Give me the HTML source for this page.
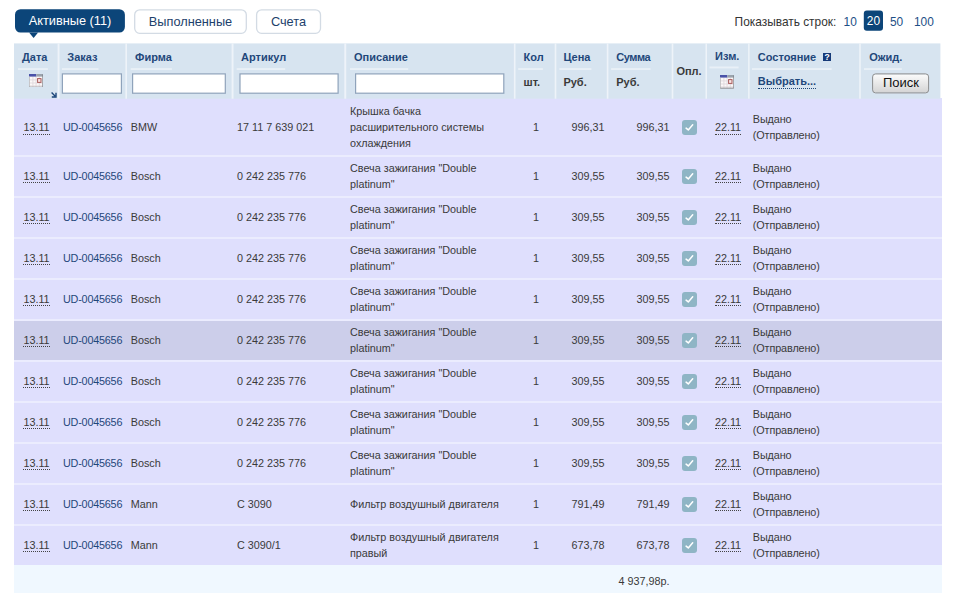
<!DOCTYPE html>
<html><head><meta charset="utf-8">
<style>
*{box-sizing:border-box}
html,body{margin:0;padding:0;background:#fff}
body{width:960px;height:598px;overflow:hidden;position:relative;font-family:"Liberation Sans",Arial,sans-serif;font-size:12px;color:#333}
.tab{z-index:2;position:absolute;top:9.2px;height:24.7px;line-height:25.6px;font-size:12.75px;color:#1d3f6b;text-align:center}
.tab.act{color:#fff;height:23.5px;line-height:24.6px}
.pg{z-index:2;position:absolute;top:12.5px;font-size:11.9px;color:#333;height:18px;line-height:18px}
.pg a{color:#1d4f86;text-decoration:none}
.hd{position:absolute;left:14px;top:43.4px;width:926.5px;height:55px;z-index:2}
.hdi{position:absolute;left:-14px;top:-43.4px;width:960px;height:120px;color:#1f477a;font-size:11px;font-weight:bold}
.l{position:absolute;top:49.8px;white-space:nowrap;line-height:14px}
.hdi input{position:absolute;top:73.4px;height:20.1px;border:1px solid transparent;background:transparent;padding:0;margin:0;outline:none}
.s{position:absolute;top:74.5px;color:#3a3a3a;white-space:nowrap;line-height:14px}
table{position:absolute;left:14px;top:98px;width:927.6px;border-collapse:separate;border-spacing:0;table-layout:fixed}
td{height:41px;font-size:10.8px;padding:0 0 2px 0;vertical-align:middle;border-top:2px solid #ebecfe;background:#dfdffd;color:#3a3a3a;line-height:16px;overflow:hidden;white-space:nowrap}
tr.h td{background:#ccceea}
tr.f td{height:57px;border-top:none;padding-top:1.2px;padding-bottom:0}
td.o{padding-left:4px;color:#1f477a;letter-spacing:-0.2px}
td.fm{padding-left:3.7px}
td.d{padding-left:4px}
td.a{padding-left:4px}
td.st{padding-left:3.8px;letter-spacing:-0.1px}
td.r{text-align:right;padding-right:3.6px}
td.q{text-align:center;padding-right:0px}
td.c{text-align:center}
td.c2{text-align:center;padding-right:0px}
td.k{padding-left:9.2px}
a.dt{color:#3a3a3a;text-decoration:none;border-bottom:1px dotted #444;display:inline-block;line-height:12.6px}
.cb{display:inline-block;width:15px;height:15px;border-radius:3px;background:#8fb5c5;vertical-align:middle;position:relative;top:0.2px}
.cb svg{display:block}
tr.f .cb{top:-0.6px}
tfoot td{background:#f0f8ff;height:28px;border-top:none;padding:3px 0 0 0}
.btn{position:absolute;left:872px;top:73px;width:57px;height:20px;border:1px solid #8e8e8e;border-radius:3.5px;background:linear-gradient(#fbfbfb,#d5d5d5);transform:translate(0.1px,0.4px);color:#111;font-weight:normal;font-size:13px;text-align:center;line-height:18.8px;padding-left:0.6px}
</style></head><body>
<svg style="position:absolute;left:0;top:0;z-index:1" width="960" height="110" viewBox="0 0 960 110"><rect x="15" y="9.2" width="109.9" height="23.4" rx="5.5" fill="#0c4579"/><path d="M29.1 32.4 H38.1 L33.6 38.1 Z" fill="#0c4579"/><rect x="134.7" y="9.8" width="111.6" height="23.5" rx="5" fill="#fff" stroke="#d3dbe4" stroke-width="1.3"/><rect x="256.6" y="9.8" width="63.9" height="23.5" rx="5" fill="#fff" stroke="#d3dbe4" stroke-width="1.3"/><rect x="863.8" y="10.5" width="19.2" height="20.3" rx="3" fill="#0c4579"/><rect x="14" y="43.4" width="926.4" height="55.3" fill="#d7e4f0"/><rect x="18" y="68.1" width="29.9" height="1.9" fill="#e9f0f7"/><rect x="62" y="68.1" width="36.5" height="1.9" fill="#e9f0f7"/><rect x="130.7" y="68.1" width="41.2" height="1.9" fill="#e9f0f7"/><rect x="236.7" y="68.1" width="48.5" height="1.9" fill="#e9f0f7"/><rect x="350" y="68.1" width="58.2" height="1.9" fill="#e9f0f7"/><rect x="518.2" y="68.1" width="24.7" height="1.9" fill="#e9f0f7"/><rect x="559.4" y="68.1" width="32.0" height="1.9" fill="#e9f0f7"/><rect x="611.1" y="68.1" width="39.4" height="1.9" fill="#e9f0f7"/><rect x="752" y="68.1" width="79.6" height="1.9" fill="#e9f0f7"/><rect x="864" y="68.1" width="37.8" height="1.9" fill="#e9f0f7"/><rect x="709.5" y="66.5" width="29.1" height="1.9" fill="#e9f0f7"/><rect x="57.6" y="43.4" width="1.9" height="55.3" fill="#eef3f9"/><rect x="125.4" y="43.4" width="1.6" height="55.3" fill="#eef3f9"/><rect x="231.6" y="43.4" width="1.9" height="55.3" fill="#eef3f9"/><rect x="344.3" y="43.4" width="1.9" height="55.3" fill="#eef3f9"/><rect x="513.9" y="43.4" width="1.6" height="55.3" fill="#eef3f9"/><rect x="554.7" y="43.4" width="1.6" height="55.3" fill="#eef3f9"/><rect x="606.8" y="43.4" width="1.6" height="55.3" fill="#eef3f9"/><rect x="671.7" y="43.4" width="1.6" height="55.3" fill="#eef3f9"/><rect x="705.5" y="43.4" width="1.5" height="55.3" fill="#eef3f9"/><rect x="748.1" y="43.4" width="1.5" height="55.3" fill="#eef3f9"/><rect x="859.2" y="43.4" width="1.6" height="55.3" fill="#eef3f9"/><rect x="62.4" y="73.9" width="59.0" height="19.3" fill="#fff" stroke="#8fa3bb" stroke-width="1.2"/><rect x="132.6" y="73.9" width="92.7" height="19.3" fill="#fff" stroke="#8fa3bb" stroke-width="1.2"/><rect x="240.0" y="73.9" width="98.1" height="19.3" fill="#fff" stroke="#8fa3bb" stroke-width="1.2"/><rect x="355.6" y="73.9" width="148.2" height="19.3" fill="#fff" stroke="#8fa3bb" stroke-width="1.2"/></svg>
<div class="tab act" style="left:15px;width:110px;font-weight:normal">Активные (11)</div>
<div class="tab" style="left:134px;width:113px">Выполненные</div>
<div class="tab" style="left:256px;width:65px">Счета</div>
<div class="pg" style="left:734.6px">Показывать строк:</div>
<div class="pg" style="left:843.6px"><a>10</a></div>
<div class="pg" style="left:863.8px;width:19.2px;top:10.6px;height:20.2px;line-height:21.5px;color:#fff;text-align:center">20</div>
<div class="pg" style="left:890px"><a>50</a></div>
<div class="pg" style="left:914px"><a>100</a></div>
<div class="hd"><div class="hdi">
<span class="l" style="left:22px">Дата</span><span class="l" style="left:67.3px">Заказ</span><span class="l" style="left:135.1px">Фирма</span><span class="l" style="left:241px">Артикул</span><span class="l" style="left:354px">Описание</span><span class="l" style="left:523.5px">Кол</span><span class="l" style="left:563.4px">Цена</span><span class="l" style="left:616.2px;letter-spacing:-0.45px">Сумма</span><span class="l" style="left:757.8px">Состояние</span><span class="l" style="left:869.2px">Ожид.</span><input type="text" style="left:61.8px;width:60.2px"><input type="text" style="left:132px;width:93.9px"><input type="text" style="left:239.4px;width:99.3px"><input type="text" style="left:355px;width:149.4px">
<svg style="position:absolute;left:28.5px;top:73.8px" width="14.2" height="13.6" viewBox="0 0 14.2 13.6"><rect x="0" y="0" width="14.2" height="13.6" fill="#fbf8f8"/><path d="M3.9 2.6v10.6M7.1 2.6v10.6M10.3 2.6v10.6M0.6 5.9h13M0.6 9h13M0.6 11.9h13" stroke="#e0d8dc" stroke-width="0.9" fill="none"/><rect x="0" y="0" width="7.4" height="2.6" fill="#4a52a8"/><rect x="7.4" y="0" width="6.8" height="2.6" fill="#9aa3ad"/><path d="M0.4 2.6V13.2" stroke="#b4b4b8" stroke-width="0.8" fill="none"/><path d="M13.8 0.5V13.2H0.2" stroke="#7c8086" stroke-width="0.9" fill="none"/><rect x="8.6" y="4.6" width="3.4" height="3.8" fill="#f8e4e4" stroke="#a85a5a" stroke-width="1"/></svg><svg style="position:absolute;left:50.8px;top:92px" width="6" height="6" viewBox="0 0 6 6"><path d="M0.6 0.6 L4 4 M5 0.8 V5 H0.8" stroke="#1a4478" stroke-width="1.4" fill="none"/></svg>
<span class="s" style="left:523.5px">шт.</span><span class="s" style="left:563.4px">Руб.</span><span class="s" style="left:616.2px">Руб.</span>
<span class="l" style="left:676.4px;top:64.1px;color:#3a3a3a">Опл.</span>
<span class="l" style="left:715.1px;top:48.7px">Изм.</span><span class="u" style="left:709.5px;width:29.1px;top:66.8px"></span><svg style="position:absolute;left:720px;top:75.3px" width="14.2" height="13.6" viewBox="0 0 14.2 13.6"><rect x="0" y="0" width="14.2" height="13.6" fill="#fbf8f8"/><path d="M3.9 2.6v10.6M7.1 2.6v10.6M10.3 2.6v10.6M0.6 5.9h13M0.6 9h13M0.6 11.9h13" stroke="#e0d8dc" stroke-width="0.9" fill="none"/><rect x="0" y="0" width="7.4" height="2.6" fill="#4a52a8"/><rect x="7.4" y="0" width="6.8" height="2.6" fill="#9aa3ad"/><path d="M0.4 2.6V13.2" stroke="#b4b4b8" stroke-width="0.8" fill="none"/><path d="M13.8 0.5V13.2H0.2" stroke="#7c8086" stroke-width="0.9" fill="none"/><rect x="8.6" y="4.6" width="3.4" height="3.8" fill="#f8e4e4" stroke="#a85a5a" stroke-width="1"/></svg>
<svg style="position:absolute;left:823.2px;top:52.7px" width="8.2" height="8.4" viewBox="0 0 8.2 8.4"><rect width="8.2" height="8.4" fill="#163a78"/><text x="4.1" y="7.3" font-size="8.6" font-weight="bold" fill="#fff" text-anchor="middle" font-family="Liberation Sans, sans-serif">?</text></svg>
<span class="s" style="left:757.8px;color:#1f477a;border-bottom:1px dotted #1f477a;line-height:13px;top:75px">Выбрать...</span>
<span class="btn">Поиск</span>
</div></div>
<table>
<colgroup><col style="width:45px"><col style="width:68px"><col style="width:106px"><col style="width:113px"><col style="width:170px"><col style="width:40px"><col style="width:52px"><col style="width:65px"><col style="width:34px"><col style="width:42px"><col style="width:112px"><col style="width:80.6px"></colgroup>
<tbody>
<tr class="f"><td class="c"><a class="dt">13.11</a></td><td class="o">UD-0045656</td><td class="fm">BMW</td><td class="a">17 11 7 639 021</td><td class="d">Крышка бачка<br>расширительного системы<br>охлаждения</td><td class="q">1</td><td class="r">996,31</td><td class="r">996,31</td><td class="k"><span class="cb"><svg width="15" height="15" viewBox="0 0 15 15"><path d="M4.1 8.1 L6.3 9.9 L10.7 4.8" fill="none" stroke="#fff" stroke-width="1.5" stroke-linecap="round" stroke-linejoin="round"/></svg></span></td><td class="c2"><a class="dt">22.11</a></td><td class="st">Выдано<br>(Отправлено)</td><td></td></tr>
<tr class=""><td class="c"><a class="dt">13.11</a></td><td class="o">UD-0045656</td><td class="fm">Bosch</td><td class="a">0 242 235 776</td><td class="d">Свеча зажигания "Double<br>platinum"</td><td class="q">1</td><td class="r">309,55</td><td class="r">309,55</td><td class="k"><span class="cb"><svg width="15" height="15" viewBox="0 0 15 15"><path d="M4.1 8.1 L6.3 9.9 L10.7 4.8" fill="none" stroke="#fff" stroke-width="1.5" stroke-linecap="round" stroke-linejoin="round"/></svg></span></td><td class="c2"><a class="dt">22.11</a></td><td class="st">Выдано<br>(Отправлено)</td><td></td></tr>
<tr class=""><td class="c"><a class="dt">13.11</a></td><td class="o">UD-0045656</td><td class="fm">Bosch</td><td class="a">0 242 235 776</td><td class="d">Свеча зажигания "Double<br>platinum"</td><td class="q">1</td><td class="r">309,55</td><td class="r">309,55</td><td class="k"><span class="cb"><svg width="15" height="15" viewBox="0 0 15 15"><path d="M4.1 8.1 L6.3 9.9 L10.7 4.8" fill="none" stroke="#fff" stroke-width="1.5" stroke-linecap="round" stroke-linejoin="round"/></svg></span></td><td class="c2"><a class="dt">22.11</a></td><td class="st">Выдано<br>(Отправлено)</td><td></td></tr>
<tr class=""><td class="c"><a class="dt">13.11</a></td><td class="o">UD-0045656</td><td class="fm">Bosch</td><td class="a">0 242 235 776</td><td class="d">Свеча зажигания "Double<br>platinum"</td><td class="q">1</td><td class="r">309,55</td><td class="r">309,55</td><td class="k"><span class="cb"><svg width="15" height="15" viewBox="0 0 15 15"><path d="M4.1 8.1 L6.3 9.9 L10.7 4.8" fill="none" stroke="#fff" stroke-width="1.5" stroke-linecap="round" stroke-linejoin="round"/></svg></span></td><td class="c2"><a class="dt">22.11</a></td><td class="st">Выдано<br>(Отправлено)</td><td></td></tr>
<tr class=""><td class="c"><a class="dt">13.11</a></td><td class="o">UD-0045656</td><td class="fm">Bosch</td><td class="a">0 242 235 776</td><td class="d">Свеча зажигания "Double<br>platinum"</td><td class="q">1</td><td class="r">309,55</td><td class="r">309,55</td><td class="k"><span class="cb"><svg width="15" height="15" viewBox="0 0 15 15"><path d="M4.1 8.1 L6.3 9.9 L10.7 4.8" fill="none" stroke="#fff" stroke-width="1.5" stroke-linecap="round" stroke-linejoin="round"/></svg></span></td><td class="c2"><a class="dt">22.11</a></td><td class="st">Выдано<br>(Отправлено)</td><td></td></tr>
<tr class="h"><td class="c"><a class="dt">13.11</a></td><td class="o">UD-0045656</td><td class="fm">Bosch</td><td class="a">0 242 235 776</td><td class="d">Свеча зажигания "Double<br>platinum"</td><td class="q">1</td><td class="r">309,55</td><td class="r">309,55</td><td class="k"><span class="cb"><svg width="15" height="15" viewBox="0 0 15 15"><path d="M4.1 8.1 L6.3 9.9 L10.7 4.8" fill="none" stroke="#fff" stroke-width="1.5" stroke-linecap="round" stroke-linejoin="round"/></svg></span></td><td class="c2"><a class="dt">22.11</a></td><td class="st">Выдано<br>(Отправлено)</td><td></td></tr>
<tr class=""><td class="c"><a class="dt">13.11</a></td><td class="o">UD-0045656</td><td class="fm">Bosch</td><td class="a">0 242 235 776</td><td class="d">Свеча зажигания "Double<br>platinum"</td><td class="q">1</td><td class="r">309,55</td><td class="r">309,55</td><td class="k"><span class="cb"><svg width="15" height="15" viewBox="0 0 15 15"><path d="M4.1 8.1 L6.3 9.9 L10.7 4.8" fill="none" stroke="#fff" stroke-width="1.5" stroke-linecap="round" stroke-linejoin="round"/></svg></span></td><td class="c2"><a class="dt">22.11</a></td><td class="st">Выдано<br>(Отправлено)</td><td></td></tr>
<tr class=""><td class="c"><a class="dt">13.11</a></td><td class="o">UD-0045656</td><td class="fm">Bosch</td><td class="a">0 242 235 776</td><td class="d">Свеча зажигания "Double<br>platinum"</td><td class="q">1</td><td class="r">309,55</td><td class="r">309,55</td><td class="k"><span class="cb"><svg width="15" height="15" viewBox="0 0 15 15"><path d="M4.1 8.1 L6.3 9.9 L10.7 4.8" fill="none" stroke="#fff" stroke-width="1.5" stroke-linecap="round" stroke-linejoin="round"/></svg></span></td><td class="c2"><a class="dt">22.11</a></td><td class="st">Выдано<br>(Отправлено)</td><td></td></tr>
<tr class=""><td class="c"><a class="dt">13.11</a></td><td class="o">UD-0045656</td><td class="fm">Bosch</td><td class="a">0 242 235 776</td><td class="d">Свеча зажигания "Double<br>platinum"</td><td class="q">1</td><td class="r">309,55</td><td class="r">309,55</td><td class="k"><span class="cb"><svg width="15" height="15" viewBox="0 0 15 15"><path d="M4.1 8.1 L6.3 9.9 L10.7 4.8" fill="none" stroke="#fff" stroke-width="1.5" stroke-linecap="round" stroke-linejoin="round"/></svg></span></td><td class="c2"><a class="dt">22.11</a></td><td class="st">Выдано<br>(Отправлено)</td><td></td></tr>
<tr class=""><td class="c"><a class="dt">13.11</a></td><td class="o">UD-0045656</td><td class="fm">Mann</td><td class="a">C 3090</td><td class="d">Фильтр воздушный двигателя</td><td class="q">1</td><td class="r">791,49</td><td class="r">791,49</td><td class="k"><span class="cb"><svg width="15" height="15" viewBox="0 0 15 15"><path d="M4.1 8.1 L6.3 9.9 L10.7 4.8" fill="none" stroke="#fff" stroke-width="1.5" stroke-linecap="round" stroke-linejoin="round"/></svg></span></td><td class="c2"><a class="dt">22.11</a></td><td class="st">Выдано<br>(Отправлено)</td><td></td></tr>
<tr class=""><td class="c"><a class="dt">13.11</a></td><td class="o">UD-0045656</td><td class="fm">Mann</td><td class="a">C 3090/1</td><td class="d">Фильтр воздушный двигателя<br>правый</td><td class="q">1</td><td class="r">673,78</td><td class="r">673,78</td><td class="k"><span class="cb"><svg width="15" height="15" viewBox="0 0 15 15"><path d="M4.1 8.1 L6.3 9.9 L10.7 4.8" fill="none" stroke="#fff" stroke-width="1.5" stroke-linecap="round" stroke-linejoin="round"/></svg></span></td><td class="c2"><a class="dt">22.11</a></td><td class="st">Выдано<br>(Отправлено)</td><td></td></tr>
</tbody>
<tfoot><tr><td colspan="7"></td><td colspan="5" style="padding-left:10.4px">4 937,98р.</td></tr></tfoot>
</table>
</body></html>
